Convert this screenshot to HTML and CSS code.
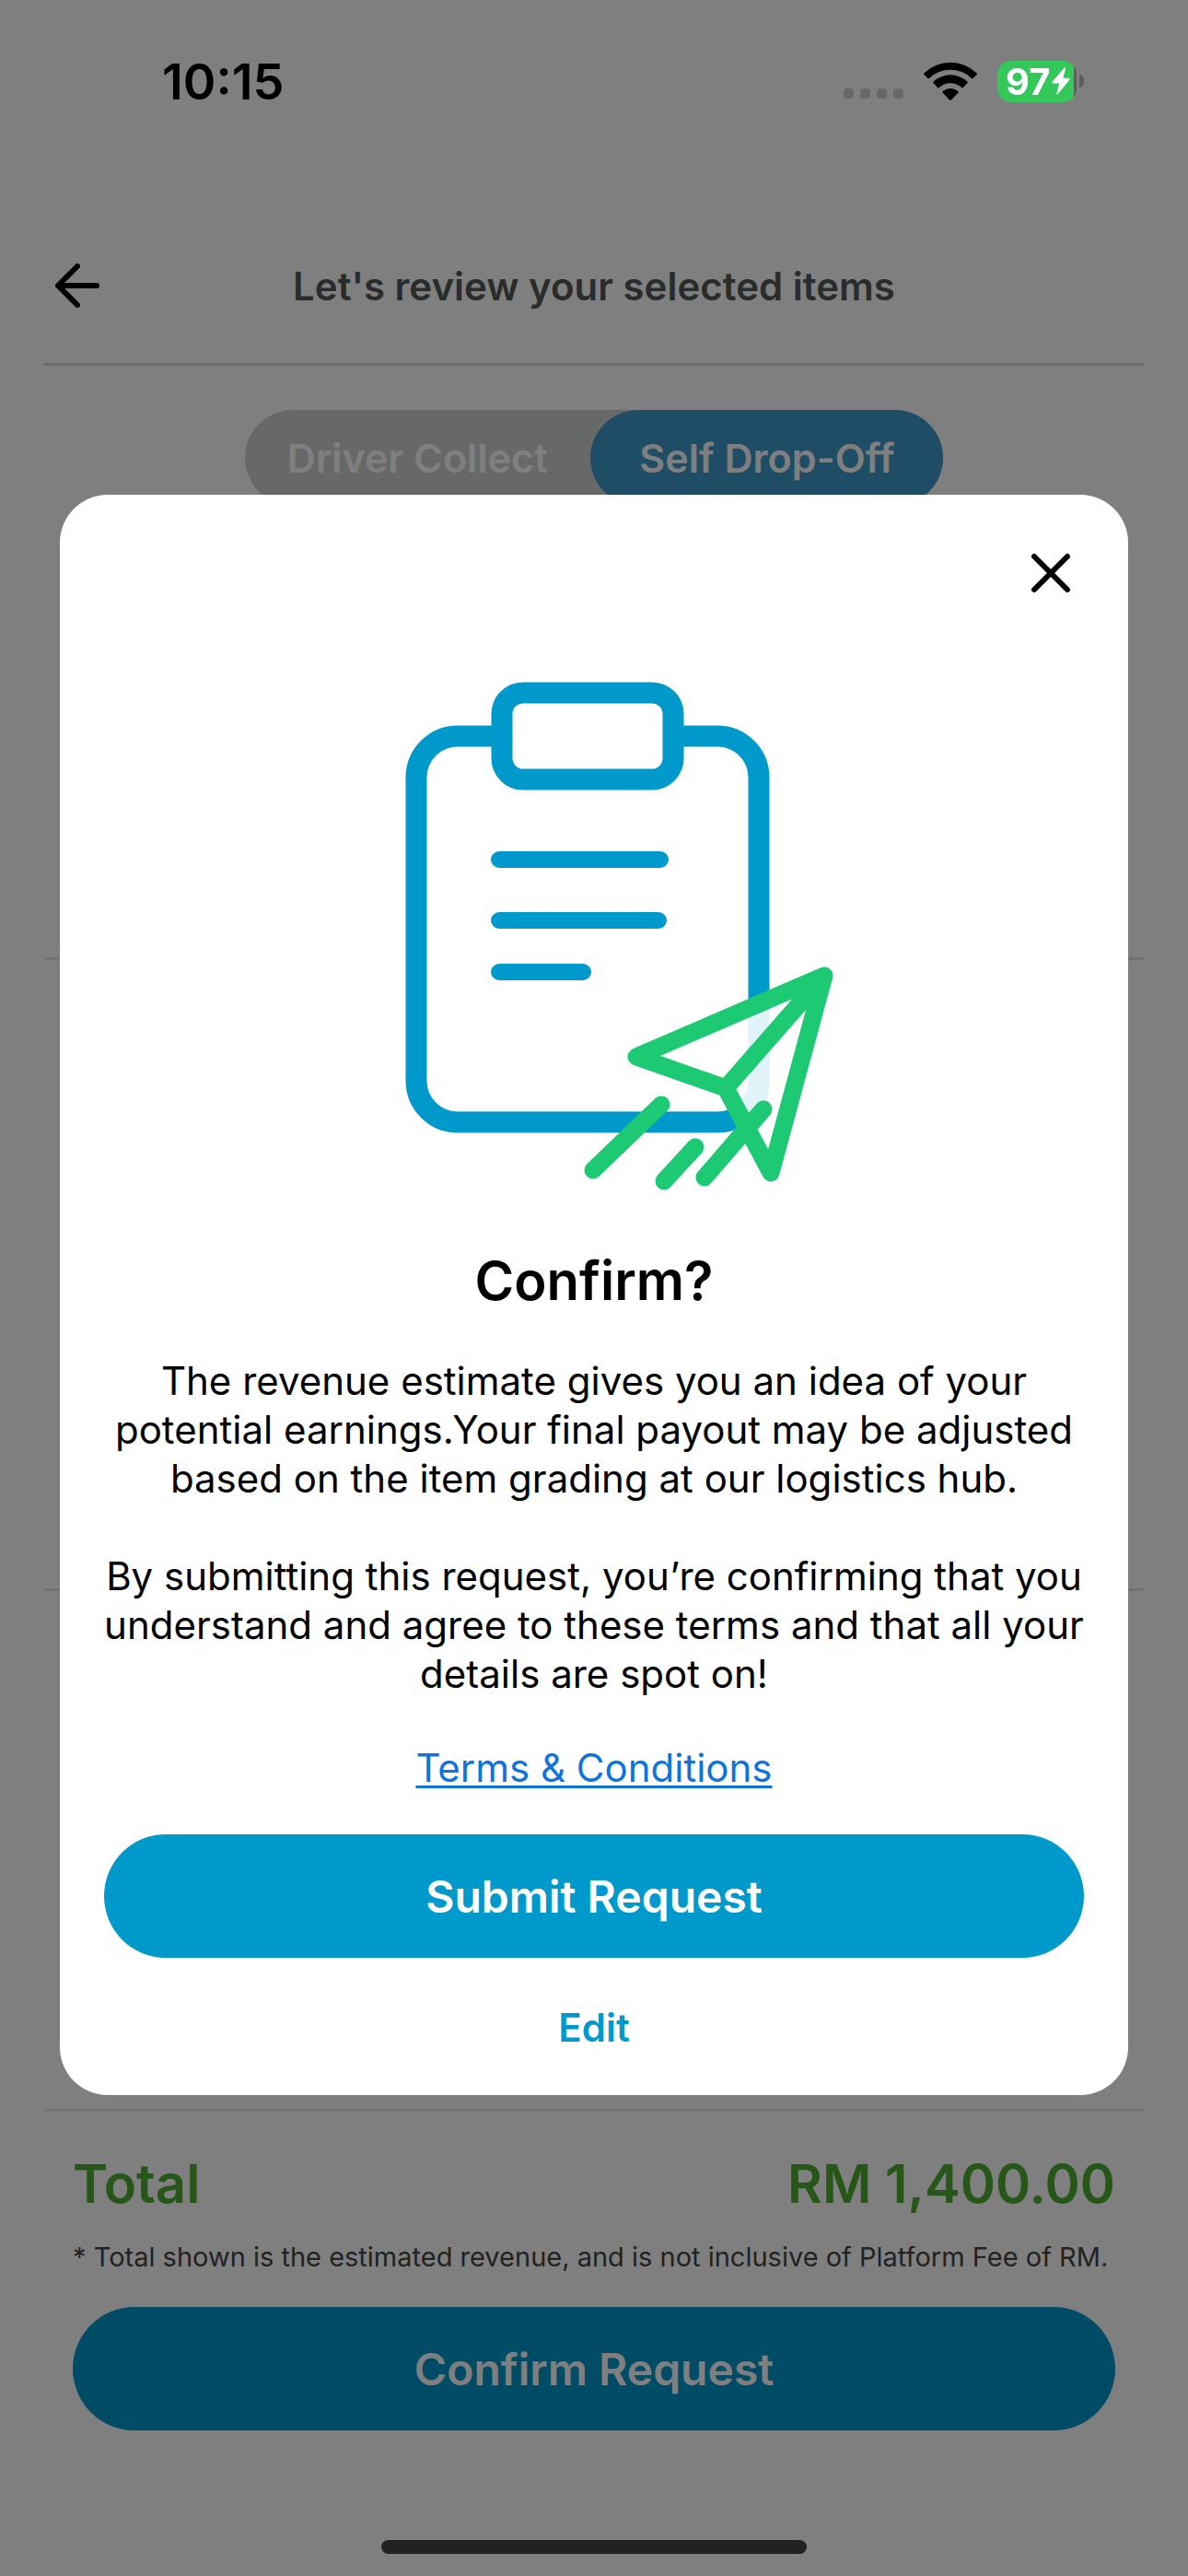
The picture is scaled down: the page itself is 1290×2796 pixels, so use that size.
FILE: index.html
```html
<!DOCTYPE html>
<html lang="en">
<head>
<meta charset="utf-8">
<meta name="viewport" content="width=device-width, initial-scale=1">
<title>Review your items</title>
<link rel="stylesheet" href="styles.css">
</head>
<body>
<div class="status-bar">
  <span class="time">10:15</span>
  <div class="status-icons">
    <span class="signal"><i></i><i></i><i></i><i></i></span>
    <svg class="wifi" viewBox="0 0 58 43" width="58" height="43" aria-hidden="true">
      <path d="M0 13.5Q0 12.800 .8 12A41 41 0 0 1 57.200 12Q58 12.800 58 13.500L53.500 18Q52.700 18.600 52 18A33 33 0 0 0 6 18Q5.300 18.600 4.500 18Z"/>
      <path d="M10.500 23Q10 22.200 10.700 21.500A27 27 0 0 1 47.300 21.500Q48 22.200 47.500 23L43 28Q42.200 28.800 41.300 28A18.500 18.500 0 0 0 16.700 28Q15.800 28.800 15 28Z"/>
      <path d="M20.300 33.300Q19.900 32.500 20.700 31.900A13.500 13.500 0 0 1 37.300 31.900Q38.100 32.500 37.700 33.300L29.900 41.500Q29 42.400 28.100 41.500Z"/>
    </svg>
    <span class="battery">
      <span class="battery-body"><span class="battery-level">97</span>
        <svg viewBox="0 0 20 30" width="20" height="30" aria-hidden="true"><path d="M13.500 .8Q15.500-.6 15 2L12.300 11.800H18.500Q20.500 12 19.200 13.800L7 28.800Q4.900 30.500 5.500 28L8.200 17.500H1.500Q-.4 17.200 .8 15.400Z"/></svg>
      </span>
      <span class="battery-tip"></span>
    </span>
  </div>
</div>

<div class="page">
  <header class="header">
    <button class="back" aria-label="Back">
      <svg viewBox="0 0 48 48" width="48" height="48" aria-hidden="true"><path d="M45 24H4M24 3L3 24L24 45"/></svg>
    </button>
    <h1>Let's review your selected items</h1>
  </header>
  <main class="items">
    <div class="toggle">
      <button>Driver Collect</button>
      <button class="active" aria-pressed="true">Self Drop-Off</button>
    </div>
    <section class="item item-first"></section>
    <section class="item"></section>
    <section class="item item-last"></section>
  </main>
  <footer class="summary">
    <div class="total"><span>Total</span><span>RM 1,400.00</span></div>
    <p class="note">* Total shown is the estimated revenue, and is not inclusive of Platform Fee of RM.</p>
    <button class="primary">Confirm Request</button>
  </footer>
</div>

<div class="overlay">
  <div class="dialog" role="dialog" aria-modal="true" aria-labelledby="dialog-title">
    <button class="close" aria-label="Close">
      <svg viewBox="0 0 72 72" width="72" height="72" aria-hidden="true"><path d="M18 18L54 54M54 18L18 54"/></svg>
    </button>
    <svg class="art" viewBox="380 730 530 575" aria-hidden="true">
      <g class="board">
        <path d="M545 799H498A45 45 0 0 0 452 844V1173A45 45 0 0 0 498 1218H778A45 45 0 0 0 824 1173V844A45 45 0 0 0 778 799H731"/>
        <rect x="545" y="752" width="186" height="94" rx="23"/>
        <path class="lines" d="M542 933H717M542 999H715M542 1055H633"/>
      </g>
      <path class="wing" d="M895 1059L691 1147L788 1181L837 1273Z"/>
      <path class="plane" d="M788 1181L691 1147L895 1059L837 1273ZL895 1059M718 1199L644 1270M755 1245L721 1282M829 1204L765 1278"/>
    </svg>
    <h2 id="dialog-title">Confirm?</h2>
    <p>The revenue estimate gives you an idea of your potential earnings.Your final payout may be adjusted based on the item grading at our logistics hub.</p>
    <p>By submitting this request, you’re confirming that you understand and agree to these terms and that all your details are spot on!</p>
    <a href="#terms">Terms &amp; Conditions</a>
    <button class="primary">Submit Request</button>
    <button class="edit">Edit</button>
  </div>
</div>
<div class="home-bar"></div>
</body>
</html>
```
FILE: styles.css
```css
* { box-sizing: border-box; }
body {
  margin: 0;
  background: #fff;
  color: #000;
  font-family: Inter, "Liberation Sans", sans-serif;
  font-size: 42px;
  line-height: 53px;
}
h1, h2, p { margin: 0; }
button {
  border: 0;
  padding: 0;
  background: none;
  color: inherit;
  font: inherit;
  cursor: pointer;
}
svg { display: block; }

/* Status bar, drawn above the dimmed page */
.status-bar {
  position: fixed;
  inset: 0 0 auto;
  z-index: 2;
  height: 176px;
  padding: 0 113px 0 176px;
  display: flex;
  justify-content: space-between;
  align-items: center;
}
.time { font-size: 54px; font-weight: 600; }
.status-icons { display: flex; align-items: center; gap: 22px; }
.signal { display: flex; gap: 7px; padding-top: 26px; }
.signal i { width: 11px; height: 11px; border-radius: 4px; background: #666968; }
.battery { display: flex; align-items: center; gap: 3px; }
.battery-body {
  display: flex;
  align-items: center;
  gap: 2px;
  width: 86px;
  height: 45px;
  padding-left: 9px;
  border-radius: 15px;
  background: linear-gradient(90deg, #34c759 83px, #5c5e5d 83px);
  color: #fff;
  font-size: 40px;
  font-weight: 700;
}
.battery-body svg { fill: #fff; }
.battery-tip { width: 5px; height: 14px; border-radius: 0 5px 5px 0; background: #5c5e5d; }

/* Page */
.page {
  min-height: 100vh;
  display: flex;
  flex-direction: column;
  padding: 226px 48px 0;
}
.header {
  display: grid;
  grid-template-columns: 72px 1fr 72px;
  align-items: center;
  height: 171px;
  border-bottom: 3px solid #d4d8d6;
}
.back { justify-self: start; padding-left: 12px; }
.back svg { fill: none; stroke: #000; stroke-width: 6; stroke-linecap: round; stroke-linejoin: round; }
h1 { color: #545858; font-size: 42px; font-weight: 600; text-align: center; }
.items { flex: 1; display: flex; flex-direction: column; padding-top: 48px; }
.toggle {
  align-self: center;
  display: flex;
  height: 104px;
  border-radius: 52px;
  background: #ced2d0;
  color: #fff;
  font-size: 43px;
  font-weight: 600;
}
.toggle button { padding: 0 46px; border-radius: 52px; }
.toggle .active { padding: 0 53px; background: #409acc; }
.item { flex: 685; border-bottom: 3px solid #e2e6e4; }
.item-first { flex: 492; }
.item-last { flex: 565; }
.summary { padding: 40px 31px 158px; }
.total {
  display: flex;
  justify-content: space-between;
  color: #4cac30;
  font-size: 58px;
  font-weight: 600;
  line-height: 76px;
}
.note { margin: 22px 0 34px; color: #444; font-size: 29px; line-height: 40px; }
.primary {
  display: block;
  width: 100%;
  height: 134px;
  border-radius: 67px;
  background: #0099cc;
  color: #fff;
  font-size: 48px;
  font-weight: 600;
}

/* Confirmation dialog */
.overlay {
  position: fixed;
  inset: 0;
  z-index: 1;
  display: flex;
  align-items: center;
  justify-content: center;
  padding: 15px 65px 0;
  background: rgba(0, 0, 0, .5);
}
.dialog {
  flex: 1;
  display: flex;
  flex-direction: column;
  align-items: center;
  padding: 49px 48px 33px;
  border-radius: 52px;
  background: #fff;
  text-align: center;
}
.close { align-self: flex-end; }
.close svg { stroke: #000; stroke-width: 6; stroke-linecap: round; }
.art { width: 530px; margin: 72px 0 47px; fill: none; stroke-linecap: round; stroke-linejoin: round; }
.board { stroke: #0099cc; stroke-width: 23; stroke-linecap: butt; }
.board rect { fill: #fff; }
.lines { stroke-width: 18; stroke-linecap: round; }
.wing { fill: #fff; fill-opacity: .88; }
.plane { stroke: #1dca73; stroke-width: 19; }
h2 { margin-bottom: 44px; font-size: 58px; font-weight: 600; line-height: 76px; }
.dialog p { margin-bottom: 53px; }
.dialog a {
  margin: -4px 0 46px;
  color: #0f73dc;
  text-decoration: underline;
  text-decoration-thickness: 3px;
  text-underline-offset: 4px;
  text-decoration-skip-ink: none;
}
.edit { margin-top: 36px; color: #0099cc; font-weight: 600; line-height: 80px; }

.home-bar {
  position: fixed;
  left: 50%;
  bottom: 24px;
  z-index: 2;
  width: 462px;
  height: 15px;
  border-radius: 8px;
  background: #222;
  transform: translateX(-50%);
}
```
